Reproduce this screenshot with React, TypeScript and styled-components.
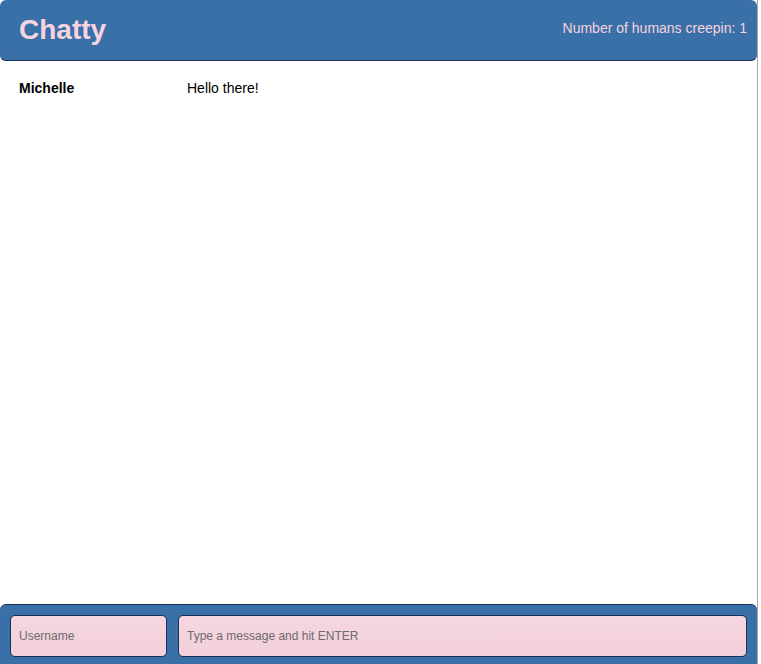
import React from "react";
import styled, { createGlobalStyle } from "styled-components";

const GlobalStyle = createGlobalStyle`
  html, body { margin: 0; padding: 0; background: #ffffff; }
  body { font-family: "Liberation Sans", Arial, Helvetica, sans-serif; overflow: hidden; }
  * { box-sizing: border-box; }
`;

const Page = styled.div`
  display: flex;
  height: 100vh;
  width: 100vw;
`;

const Shell = styled.div`
  display: flex;
  flex-direction: column;
  width: 758px;
  height: 100%;
  border-right: 1px solid #a9a9a9;
`;

const NavBar = styled.nav`
  display: flex;
  align-items: center;
  justify-content: space-between;
  height: 61px;
  padding: 0 10px 1px 19px;
  background: #3a70a8;
  border-bottom: 1px solid #1c2f55;
  border-radius: 6px;
  flex-shrink: 0;
`;

const Brand = styled.a`
  font-size: 28px;
  font-weight: bold;
  color: #f7d3df;
  text-decoration: none;
  margin-top: 1px;
`;

const Counter = styled.span`
  font-size: 14px;
  color: #f7d3df;
  margin-top: -4px;
`;

const Messages = styled.main`
  flex: 1;
  padding-top: 19px;
`;

const MessageRow = styled.div`
  display: flex;
  align-items: center;
  font-size: 14px;
  color: #000;
  line-height: 17px;
`;

const Username = styled.span`
  width: 187px;
  padding-left: 19px;
  font-weight: bold;
`;

const Content = styled.span``;

const Footer = styled.footer`
  display: flex;
  gap: 11px;
  height: 60px;
  padding: 10px 10px 0 10px;
  background: #3a70a8;
  border-top: 1px solid #1c2f55;
  border-radius: 6px 6px 0 0;
  flex-shrink: 0;
`;

const Field = styled.input<{ $w?: number }>`
  ${(p) => (p.$w ? `width: ${p.$w}px; flex: none;` : `flex: 1;`)}
  height: 42px;
  padding: 0 8px;
  font-family: "Liberation Sans", Arial, Helvetica, sans-serif;
  font-size: 12px;
  color: #333;
  background: linear-gradient(#f6d6df, #f1d0d9);
  border: 1px solid #1c2f55;
  border-radius: 5px;
  outline: none;
  &::placeholder { color: #6e6a70; }
`;

export default function App() {
  return (
    <Page>
      <GlobalStyle />
      <Shell>
        <NavBar>
          <Brand href="#">Chatty</Brand>
          <Counter>Number of humans creepin: 1</Counter>
        </NavBar>
        <Messages>
          <MessageRow>
            <Username>Michelle</Username>
            <Content>Hello there!</Content>
          </MessageRow>
        </Messages>
        <Footer>
          <Field $w={157} placeholder="Username" />
          <Field placeholder="Type a message and hit ENTER" />
        </Footer>
      </Shell>
    </Page>
  );
}
